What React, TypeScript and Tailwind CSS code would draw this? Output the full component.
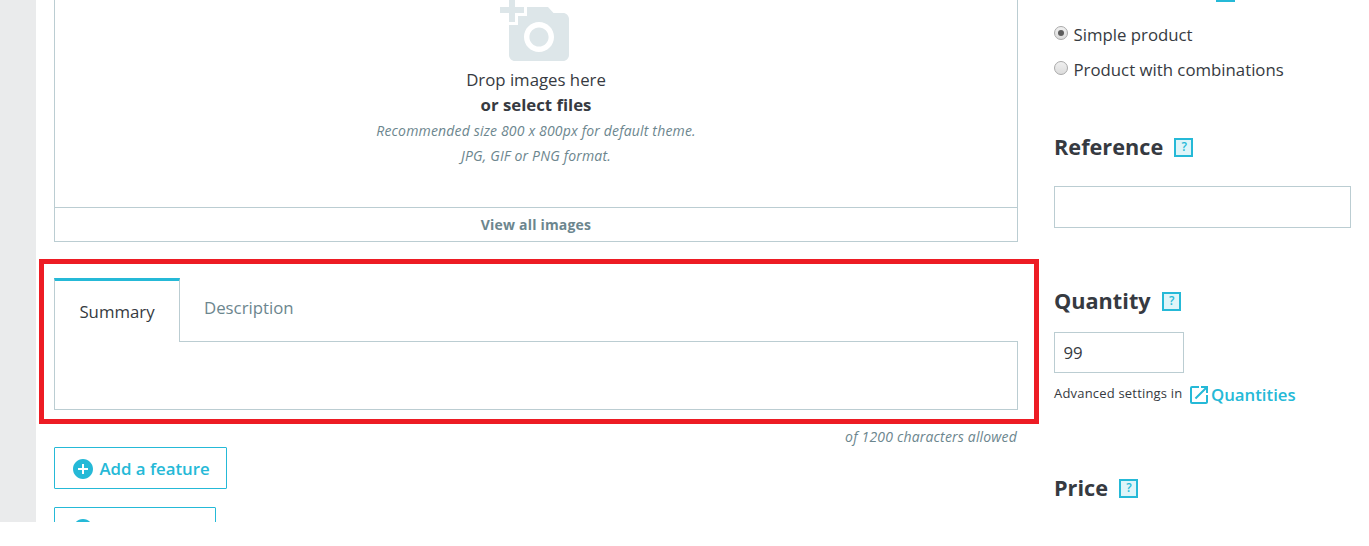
import type { ReactNode } from "react";
import { MdAddAPhoto, MdAddCircle, MdOpenInNew } from "react-icons/md";

interface SectionTitleProps {
  children: ReactNode;
}

function HelpBox({ mark = "?" }: { mark?: string }) {
  return (
    <span className="flex h-[19px] w-[19px] shrink-0 items-center justify-center border-2 border-[#25b9d7] bg-[#dff5f9] text-[12px] leading-[15px] font-semibold text-[#25b9d7]">
      <span className="-mt-px ml-px">{mark}</span>
    </span>
  );
}

function SectionTitle({ children }: SectionTitleProps) {
  return (
    <div className="flex h-[30px] items-center gap-[11px]">
      <h2 className="text-[21.7px] leading-[30px] font-bold whitespace-nowrap">{children}</h2>
      <HelpBox />
    </div>
  );
}

function RadioOption({ label, checked }: { label: string; checked?: boolean }) {
  return (
    <label className="flex h-[35px] items-start gap-[5.5px] text-[16.8px] leading-[24px]">
      <span className="mt-[3px] flex h-[14px] w-[14px] items-center justify-center rounded-full border border-[#a9a9a9] bg-linear-to-b from-[#f0f0f0] to-[#dcdcdc]">
        {checked && <span className="h-[6px] w-[6px] rounded-full bg-[#5c5c5c]" />}
      </span>
      <span>{label}</span>
    </label>
  );
}

function DropZone() {
  return (
    <div className="h-[242px] border-x border-b border-[#bbcdd2] text-center">
      <div className="flex h-[207px] flex-col items-center">
        <MdAddAPhoto className="-mt-[5px] h-[72px] w-[72px] shrink-0 text-[#dde6e9]" />
        <p className="text-[16.8px] leading-[25px]">Drop images here</p>
        <p className="mb-px text-[16.8px] leading-[25px] font-bold">or select files</p>
        <p className="text-[14px] leading-[25px] tracking-[0.17px] text-[#6c868e] italic">
          Recommended size 800 x 800px for default theme.
        </p>
        <p className="text-[14px] leading-[25px] tracking-[0.17px] text-[#6c868e] italic">JPG, GIF or PNG format.</p>
      </div>
      <div className="h-[34px] border-t border-[#bbcdd2] text-[14px] leading-[34px] font-bold tracking-[0.2px] text-[#6c868e]">
        View all images
      </div>
    </div>
  );
}

function DescriptionTabs() {
  return (
    <div className="relative mt-9">
      <div className="flex h-16 text-[16.8px]">
        <button className="w-[126px] border-x border-t-[3px] border-x-[#bbcdd2] border-t-[#25b9d7] pt-px">
          Summary
        </button>
        <div className="-ml-px flex-1 border-b border-[#bbcdd2]">
          <button className="ml-[25px] h-[60px] text-[#6c868e]">Description</button>
        </div>
      </div>
      <div className="h-[68px] border-x border-b border-[#bbcdd2]" />
      <div className="pointer-events-none absolute -top-[19px] -right-[21px] -bottom-[14px] -left-[15px] border-5 border-[#ed1c24]" />
    </div>
  );
}

function App() {
  return (
    <div className="h-[546px] w-[1369px] bg-white font-['Open_Sans',sans-serif] text-[#363a41]">
      <div className="flex h-[522px] overflow-hidden">
        <aside className="w-9 shrink-0 bg-[#eaebec]" />
        <main className="ml-[18px] w-[964px] shrink-0">
          <DropZone />
          <DescriptionTabs />
          <p className="mt-[17px] h-5 pr-px text-right text-[14px] leading-5 tracking-[0.18px] text-[#6c868e] italic">
            of 1200 characters allowed
          </p>
          <button className="flex h-[42px] w-[173px] items-center gap-[4.5px] rounded-[1px] border border-[#25b9d7] pt-px pl-4 text-[16.8px] font-semibold whitespace-nowrap text-[#25b9d7]">
            <MdAddCircle className="h-6 w-6 shrink-0" />
            <span>Add a feature</span>
          </button>
          <button className="mt-[18px] flex h-[42px] w-[162px] items-center rounded-[1px] border border-[#25b9d7] pt-px pl-4 text-[#25b9d7]">
            <MdAddCircle className="h-6 w-6 shrink-0" />
          </button>
        </main>
        <section className="ml-9 w-[297px] shrink-0">
          <div className="-mt-[17px] pl-[162px]">
            <HelpBox mark="" />
          </div>
          <div className="mt-[21px]">
            <RadioOption label="Simple product" checked />
            <RadioOption label="Product with combinations" />
          </div>
          <div className="mt-[39px]">
            <SectionTitle>Reference</SectionTitle>
            <input className="mt-[24px] block h-[42px] w-full border border-[#bbcdd2] px-[9px] text-[16.8px]" />
          </div>
          <div className="mt-[58px]">
            <SectionTitle>Quantity</SectionTitle>
            <input
              className="mt-[16px] block h-[41px] w-[130px] border border-[#bbcdd2] px-[8.5px] text-[16.8px]"
              defaultValue="99"
            />
            <div className="mt-[8px] flex h-[28px] items-center whitespace-nowrap">
              <span className="-mt-[3px] text-[13px] tracking-[0.19px]">Advanced settings in</span>
              <a className="ml-[5px] flex items-center text-[16.8px] font-semibold text-[#25b9d7]">
                <MdOpenInNew className="h-6 w-6" />
                <span className="-ml-[0.5px]">Quantities</span>
              </a>
            </div>
          </div>
          <div className="mt-[64px]">
            <SectionTitle>Price</SectionTitle>
          </div>
        </section>
      </div>
    </div>
  );
}

export default App;
